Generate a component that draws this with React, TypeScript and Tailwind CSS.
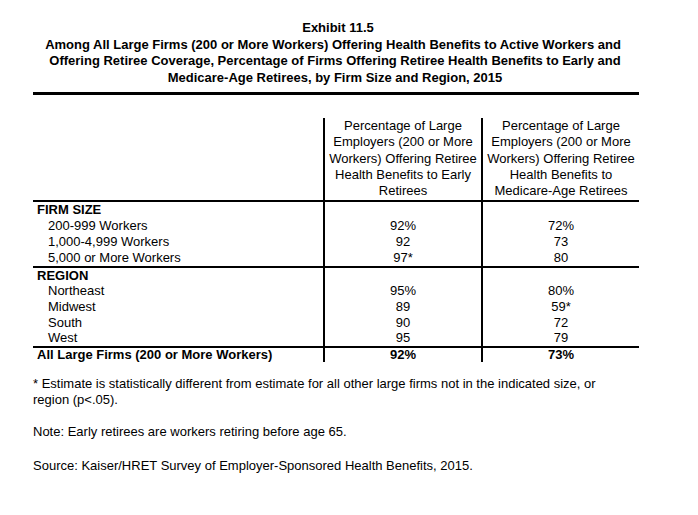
const rows: { label: string; early?: string; medicare?: string; group?: boolean }[] = [
  { label: "FIRM SIZE", group: true },
  { label: "200-999 Workers", early: "92%", medicare: "72%" },
  { label: "1,000-4,999 Workers", early: "92", medicare: "73" },
  { label: "5,000 or More Workers", early: "97*", medicare: "80" },
  { label: "REGION", group: true },
  { label: "Northeast", early: "95%", medicare: "80%" },
  { label: "Midwest", early: "89", medicare: "59*" },
  { label: "South", early: "90", medicare: "72" },
  { label: "West", early: "95", medicare: "79" },
];

function Row({ r }: { r: (typeof rows)[number] }) {
  return (
    <>
      <div className={r.group ? "pl-[4px] font-bold" : "pl-[15px]"}>{r.label}</div>
      <div className="border-l-2 border-black text-center">{r.early}</div>
      <div className="border-l-2 border-black text-center">{r.medicare}</div>
    </>
  );
}

export default function App() {
  const firm = rows.slice(0, 4);
  const region = rows.slice(4);
  return (
    <div className="w-[698px] h-[515px] bg-white text-black font-['Liberation_Sans',Arial,sans-serif] text-[13px]">
      <div className="w-[670px] pt-[20px] text-center font-bold leading-[16.7px]">
        <div className="pl-[6px]">Exhibit 11.5</div>
        <div className="pr-[4px]">Among All Large Firms (200 or More Workers) Offering Health Benefits to Active Workers and</div>
        <div>Offering Retiree Coverage, Percentage of Firms Offering Retiree Health Benefits to Early and</div>
        <div>Medicare-Age Retirees, by Firm Size and Region, 2015</div>
      </div>

      <div className="ml-[33px] mt-[5px] w-[606px] border-t-[3px] border-black">
        <div className="grid grid-cols-[290px_158px_158px] pt-[23px] leading-[16.4px]">
          <div />
          <div className="border-l-2 border-black text-center">
            Percentage of Large Employers (200 or More Workers) Offering Retiree Health Benefits to Early Retirees
          </div>
          <div className="border-l-2 border-black text-center">
            Percentage of Large Employers (200 or More Workers) Offering Retiree Health Benefits to Medicare-Age Retirees
          </div>
        </div>
        <div className="grid grid-cols-[290px_158px_158px] border-t-2 border-black leading-[16px]">
          {firm.map((r) => (
            <Row key={r.label} r={r} />
          ))}
        </div>
        <div className="grid grid-cols-[290px_158px_158px] border-t-2 border-black leading-[15.6px]">
          {region.map((r) => (
            <Row key={r.label} r={r} />
          ))}
        </div>
        <div className="grid grid-cols-[290px_158px_158px] border-t-2 border-black leading-[14px] font-bold">
          <div className="pl-[4px]">All Large Firms (200 or More Workers)</div>
          <div className="border-l-2 border-black text-center">92%</div>
          <div className="border-l-2 border-black text-center">73%</div>
        </div>
      </div>

      <div className="ml-[33px] mt-[14px] w-[590px] leading-[16px]">
        <p>* Estimate is statistically different from estimate for all other large firms not in the indicated size, or region (p&lt;.05).</p>
        <p className="mt-[16px]">Note: Early retirees are workers retiring before age 65.</p>
        <p className="mt-[18px]">Source: Kaiser/HRET Survey of Employer-Sponsored Health Benefits, 2015.</p>
      </div>
    </div>
  );
}
